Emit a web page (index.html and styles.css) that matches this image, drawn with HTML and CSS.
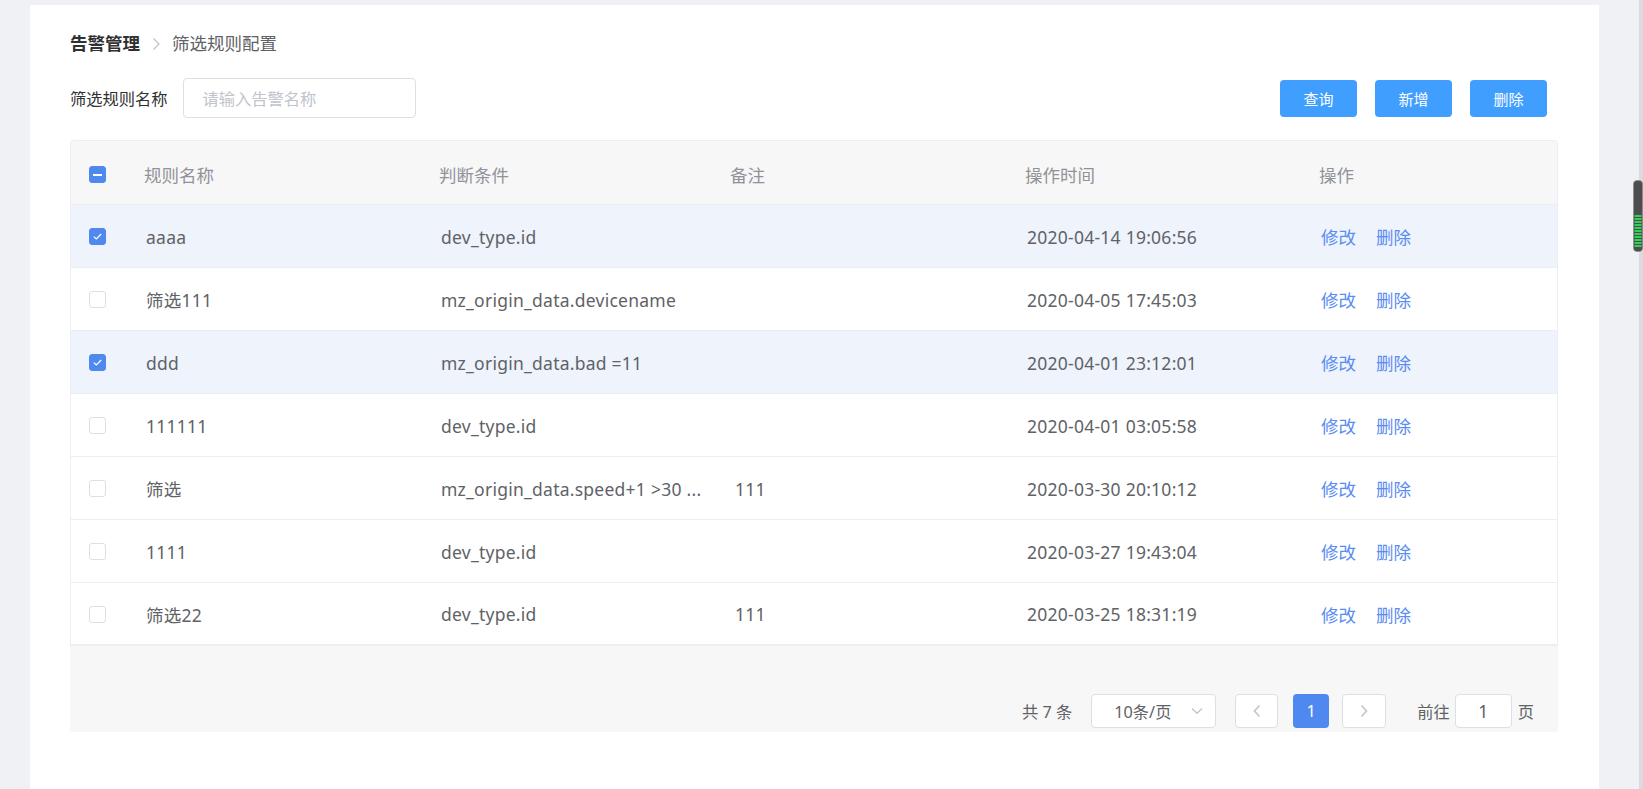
FILE: index.html
```html
<!DOCTYPE html>
<html lang="zh-CN">
<head>
<meta charset="utf-8">
<title>筛选规则配置</title>
<link rel="stylesheet" href="styles.css">
</head>
<body>
<div class="page">
  <main class="panel">
    <nav class="breadcrumb">
      <span class="crumb-root">告警管理</span>
      <svg class="crumb-sep" width="10" height="14" viewBox="0 0 10 14"><path d="M2.5 1.5 L8 7 L2.5 12.5" fill="none" stroke="#c0c4cc" stroke-width="1.3"/></svg>
      <span class="crumb-current">筛选规则配置</span>
    </nav>

    <div class="search-row">
      <label class="search-label">筛选规则名称</label>
      <div class="search-input"><span class="placeholder">请输入告警名称</span></div>
      <div class="actions">
        <button class="btn">查询</button>
        <button class="btn">新增</button>
        <button class="btn">删除</button>
      </div>
    </div>

    <div class="table-wrap">
      <table class="grid">
        <colgroup>
          <col class="c-check"><col class="c-name"><col class="c-cond"><col class="c-remark"><col class="c-time"><col class="c-ops">
        </colgroup>
        <thead>
          <tr>
            <th><span class="cb cb-on"><span class="cb-dash"></span></span></th>
            <th>规则名称</th>
            <th>判断条件</th>
            <th class="th-remark">备注</th>
            <th>操作时间</th>
            <th>操作</th>
          </tr>
        </thead>
        <tbody>
          <tr class="sel">
            <td><span class="cb cb-on"><svg width="11" height="9" viewBox="0 0 11 9"><path d="M1.8 4.6 L4.3 7 L9.2 2" fill="none" stroke="#fff" stroke-width="1.2"/></svg></span></td>
            <td>aaaa</td><td>dev_type.id</td><td></td><td>2020-04-14 19:06:56</td>
            <td><a class="link">修改</a><a class="link">删除</a></td>
          </tr>
          <tr>
            <td><span class="cb"></span></td>
            <td>筛选111</td><td>mz_origin_data.devicename</td><td></td><td>2020-04-05 17:45:03</td>
            <td><a class="link">修改</a><a class="link">删除</a></td>
          </tr>
          <tr class="sel">
            <td><span class="cb cb-on"><svg width="11" height="9" viewBox="0 0 11 9"><path d="M1.8 4.6 L4.3 7 L9.2 2" fill="none" stroke="#fff" stroke-width="1.2"/></svg></span></td>
            <td>ddd</td><td>mz_origin_data.bad =11</td><td></td><td>2020-04-01 23:12:01</td>
            <td><a class="link">修改</a><a class="link">删除</a></td>
          </tr>
          <tr>
            <td><span class="cb"></span></td>
            <td>111111</td><td>dev_type.id</td><td></td><td>2020-04-01 03:05:58</td>
            <td><a class="link">修改</a><a class="link">删除</a></td>
          </tr>
          <tr>
            <td><span class="cb"></span></td>
            <td>筛选</td><td>mz_origin_data.speed+1 &gt;30 ...</td><td>111</td><td>2020-03-30 20:10:12</td>
            <td><a class="link">修改</a><a class="link">删除</a></td>
          </tr>
          <tr>
            <td><span class="cb"></span></td>
            <td>1111</td><td>dev_type.id</td><td></td><td>2020-03-27 19:43:04</td>
            <td><a class="link">修改</a><a class="link">删除</a></td>
          </tr>
          <tr>
            <td><span class="cb"></span></td>
            <td>筛选22</td><td>dev_type.id</td><td>111</td><td>2020-03-25 18:31:19</td>
            <td><a class="link">修改</a><a class="link">删除</a></td>
          </tr>
        </tbody>
      </table>
    </div>

    <div class="table-footer">
      <div class="pager">
        <span class="total">共 7 条</span>
        <div class="sizes">
          <span>10条/页</span>
          <svg class="sizes-arrow" width="12" height="8" viewBox="0 0 12 8"><path d="M1 1.5 L6 6.3 L11 1.5" fill="none" stroke="#c0c4cc" stroke-width="1.2"/></svg>
        </div>
        <span class="pg-btn pg-prev"><svg width="10" height="14" viewBox="0 0 10 14"><path d="M7.5 1.5 L2.5 7 L7.5 12.5" fill="none" stroke="#c0c4cc" stroke-width="1.6"/></svg></span>
        <span class="pg-num">1</span>
        <span class="pg-btn pg-next"><svg width="10" height="14" viewBox="0 0 10 14"><path d="M2.5 1.5 L7.5 7 L2.5 12.5" fill="none" stroke="#c0c4cc" stroke-width="1.6"/></svg></span>
        <span class="jump-label">前往</span>
        <span class="jump-input">1</span>
        <span class="jump-unit">页</span>
      </div>
    </div>
  </main>
</div>

<div class="track"></div>
<div class="meter">
  <svg width="10" height="72" viewBox="0 0 10 72">
    <rect x="0.5" y="0.5" width="9" height="71" rx="3.5" fill="#4d4d4f" stroke="#8a8a8c" stroke-width="0.6"/>
    <g fill="#2fd256">
      <rect x="1.5" y="35" width="7" height="2"/>
      <rect x="1.5" y="38" width="7" height="2"/>
      <rect x="1.5" y="41" width="7" height="2"/>
      <rect x="1.5" y="44" width="7" height="2"/>
      <rect x="1.5" y="47" width="7" height="2"/>
      <rect x="1.5" y="50" width="7" height="2"/>
      <rect x="1.5" y="53" width="7" height="2"/>
      <rect x="1.5" y="56" width="7" height="2"/>
      <rect x="1.5" y="59" width="7" height="2"/>
      <rect x="1.5" y="62" width="7" height="2"/>
      <rect x="1.5" y="65" width="7" height="2"/>
    </g>
  </svg>
</div>
</body>
</html>
```

FILE: styles.css
```css
* { box-sizing: border-box; }

html, body {
  margin: 0;
  padding: 0;
}

body {
  background: #eff1f5;
  font-family: "Noto Sans", "Noto Sans CJK SC", sans-serif;
  color: #606266;
  overflow: hidden;
}

.page {
  display: flex;
  padding: 5px 44px 0 30px;
  min-height: 100vh;
}

.panel {
  flex: 1;
  background: #fff;
  padding: 28px 41px 0 40px;
  min-height: calc(100vh - 5px);
}

/* breadcrumb */
.breadcrumb {
  display: flex;
  align-items: center;
  height: 21px;
  font-size: 17.5px;
  line-height: 21px;
}
.crumb-root {
  font-weight: 700;
  color: #303133;
}
.crumb-sep {
  margin: 0 11px 0 11px;
}
.crumb-current {
  color: #606266;
}

/* search row */
.search-row {
  display: flex;
  align-items: center;
  margin-top: 24px;
  height: 40px;
}
.search-label {
  font-size: 16.25px;
  color: #303133;
  margin-right: 15px;
}
.search-input {
  width: 233px;
  height: 40px;
  border: 1px solid #dcdfe6;
  border-radius: 4px;
  padding-left: 19px;
  display: flex;
  align-items: center;
}
.placeholder {
  font-size: 16.25px;
  color: #c0c4cc;
}
.actions {
  margin-left: auto;
  margin-right: 11px;
  display: flex;
  gap: 18px;
}
.btn {
  width: 77px;
  height: 37px;
  border: none;
  border-radius: 4px;
  background: #409eff;
  color: #fff;
  font-family: "Noto Sans", "Noto Sans CJK SC", sans-serif;
  font-size: 15px;
  padding: 0;
}

/* table */
.table-wrap {
  margin-top: 22px;
  border: 1px solid #ebeef5;
  border-bottom: 2px solid #ebeef5;
  border-radius: 4px 4px 0 0;
  overflow: hidden;
}
.grid {
  width: 100%;
  table-layout: fixed;
  border-collapse: separate;
  border-spacing: 0;
  font-size: 17.5px;
}
.c-check { width: 62px; }
.c-name { width: 295px; }
.c-cond { width: 294px; }
.c-remark { width: 292px; }
.c-time { width: 294px; }
.c-ops { width: 249px; }

.grid th {
  height: 64px;
  background: #f7f7f7;
  color: #909399;
  font-weight: 400;
  text-align: left;
  padding: 4px 13px 0 11px;
  border-bottom: 1px solid #ebeef5;
  vertical-align: middle;
}
.grid th.th-remark {
  padding-left: 8px;
}
.grid td {
  height: 63px;
  padding: 1px 13px 0;
  border-bottom: 1px solid #ebeef5;
  color: #606266;
  vertical-align: middle;
  white-space: nowrap;
  overflow: hidden;
  letter-spacing: 0.25px;
}
.grid tbody tr:last-child td {
  border-bottom: none;
  height: 61px;
}
.grid th:first-child,
.grid td:first-child {
  padding-left: 18px;
  padding-right: 0;
}
.grid tr.sel td {
  background: #eef3fc;
}

/* checkbox */
.cb {
  display: flex;
  align-items: center;
  justify-content: center;
  width: 17px;
  height: 17px;
  border: 1px solid #dcdfe6;
  border-radius: 3px;
  background: #fff;
}
.cb-on {
  background: #4f89ef;
  border-color: #4f89ef;
}
.cb-dash {
  width: 9px;
  height: 2px;
  background: #fff;
}

.link {
  color: #5a8cf2;
  margin-right: 20px;
  cursor: pointer;
  letter-spacing: 0;
}

/* footer / pager */
.table-footer {
  height: 86px;
  background: #f7f7f7;
  display: flex;
  align-items: flex-end;
  justify-content: flex-end;
  padding: 0 24px 4px 0;
}
.pager {
  display: flex;
  align-items: center;
  height: 34px;
  font-size: 16.25px;
  color: #606266;
}
.total {
  margin-right: 19px;
}
.sizes {
  width: 125px;
  height: 34px;
  border: 1px solid #dcdfe6;
  border-radius: 4px;
  background: #fff;
  display: flex;
  align-items: center;
  padding-left: 22px;
  position: relative;
  margin-right: 19px;
}
.sizes-arrow {
  margin-left: auto;
  margin-right: 12px;
}
.pg-btn {
  height: 34px;
  border: 1px solid #dcdfe6;
  border-radius: 4px;
  background: #fff;
  display: flex;
  align-items: center;
  justify-content: center;
}
.pg-prev { width: 43px; margin-right: 15px; }
.pg-next { width: 44px; margin-right: 31px; }
.pg-num {
  width: 36px;
  height: 34px;
  border-radius: 4px;
  background: #4f89ef;
  color: #fff;
  display: flex;
  align-items: center;
  justify-content: center;
  margin-right: 13px;
}
.jump-label {
  margin-right: 5px;
}
.jump-input {
  width: 57px;
  height: 34px;
  border: 1px solid #dcdfe6;
  border-radius: 4px;
  background: #fff;
  display: flex;
  align-items: center;
  justify-content: center;
  margin-right: 6px;
  font-size: 17.5px;
}

/* window overlays */
.track {
  position: fixed;
  top: 0;
  right: 0;
  width: 4px;
  height: 100vh;
  background: #dadbdf;
}
.meter {
  position: fixed;
  left: 1633px;
  top: 180px;
  width: 10px;
  height: 72px;
  line-height: 0;
}
```
